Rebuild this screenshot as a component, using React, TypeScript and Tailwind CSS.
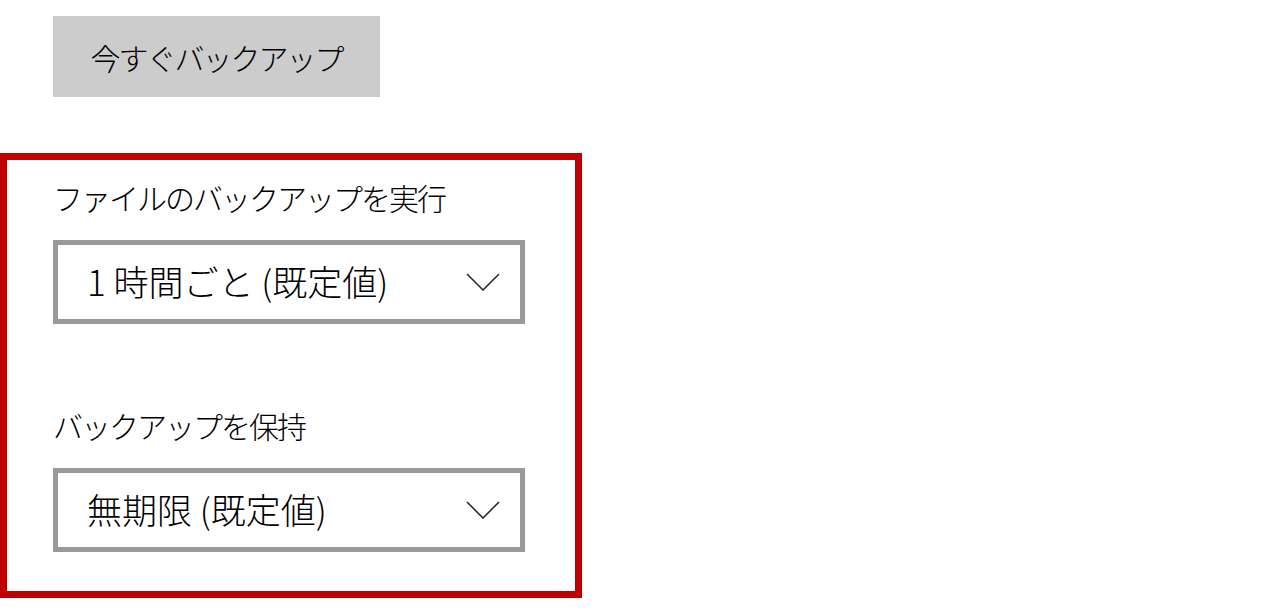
import React from "react";

const FONT = { fontFamily: '"Noto Sans CJK JP", "Noto Sans", sans-serif' };

function Chevron() {
  return (
    <svg width="34" height="18" viewBox="0 0 34 18" fill="none">
      <polyline points="1,1 17,17 33,1" stroke="#222" strokeWidth="1.5" />
    </svg>
  );
}

function Select({ value }: { value: string }) {
  return (
    <div className="flex h-[84px] w-[472px] items-center justify-between border-[5px] border-[#999999] bg-white pl-[29px] pr-[20px]">
      <span className="pb-[4px] text-[35px] font-light leading-none text-black">{value}</span>
      <Chevron />
    </div>
  );
}

export default function App() {
  return (
    <div className="min-h-[613px] w-[1280px] bg-white pt-[16px]" style={FONT}>
      <div className="pl-[53px]">
        <button className="flex h-[81px] w-[327px] items-center justify-center bg-[#cccccc] text-[30px] font-light leading-none tracking-[-2px] text-black">
          今すぐバックアップ
        </button>
      </div>
      <div className="mt-[56px] flex h-[445px] w-[582px] flex-col border-[7px] border-[#c00000] pl-[46px] pt-[17px]">
        <div className="h-[40px] text-[30px] font-light leading-[40px] tracking-[-2px] text-black">
          ファイルのバックアップを実行
        </div>
        <div className="mt-[23px]">
          <Select value="1 時間ごと (既定値)" />
        </div>
        <div className="mt-[81px] h-[40px] text-[30px] font-light leading-[40px] tracking-[-2px] text-black">
          バックアップを保持
        </div>
        <div className="mt-[23px]">
          <Select value="無期限 (既定値)" />
        </div>
      </div>
    </div>
  );
}
